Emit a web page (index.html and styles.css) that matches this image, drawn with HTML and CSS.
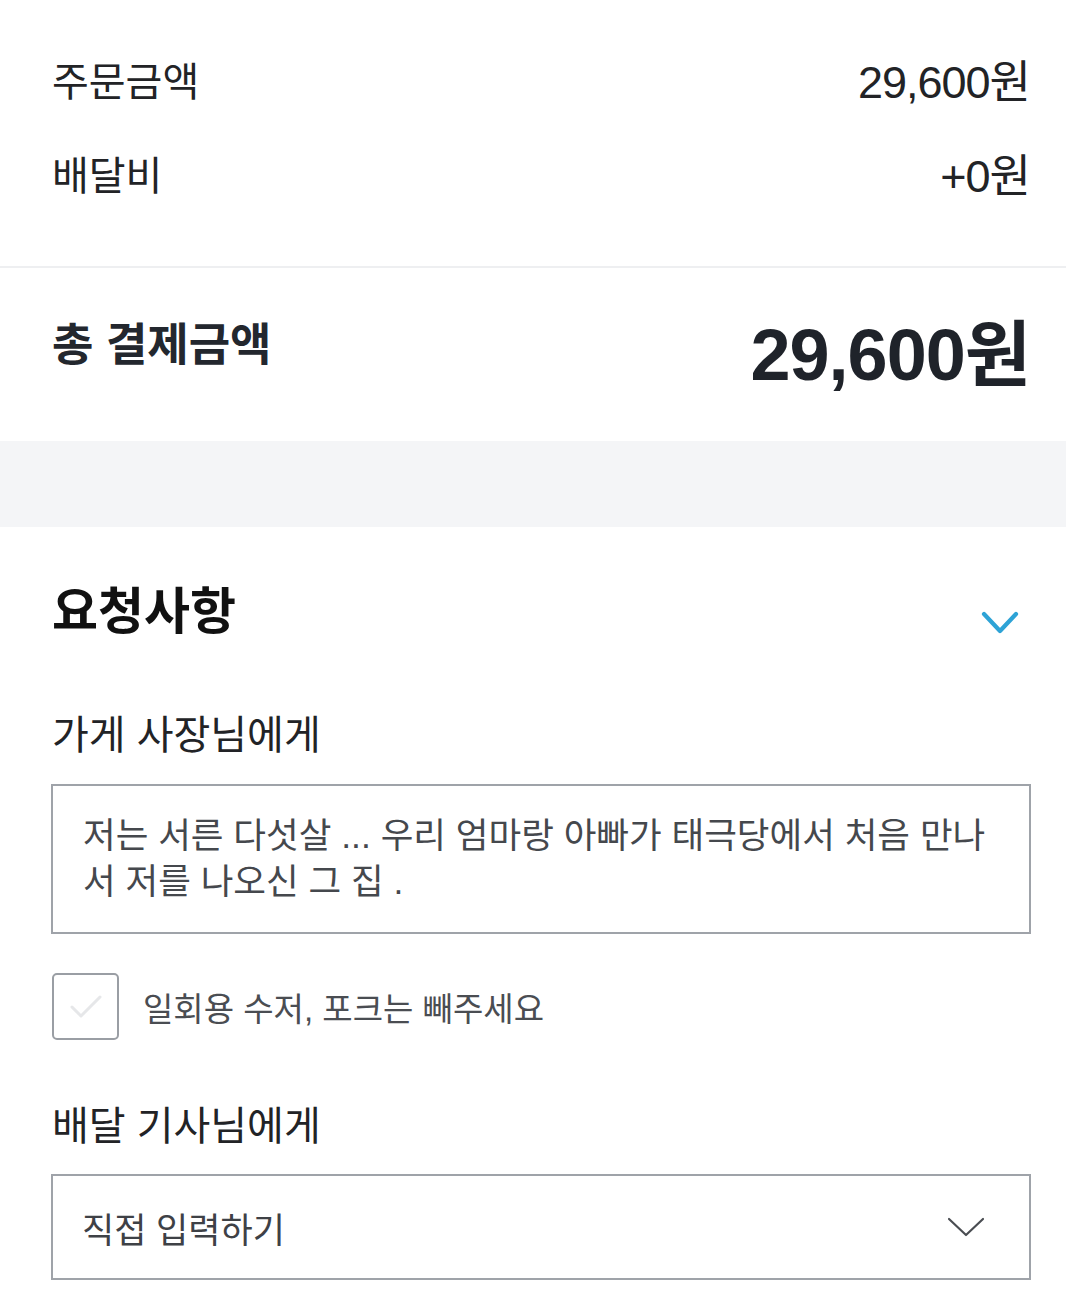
FILE: index.html
```html
<!DOCTYPE html>
<html lang="ko">
<head>
<meta charset="utf-8">
<title>주문 요약</title>
<link rel="stylesheet" href="styles.css">
</head>
<body>
<div class="page">
  <section class="summary">
    <div class="row">
      <span class="row-label">주문금액</span>
      <span class="row-value">29,600원</span>
    </div>
    <div class="row">
      <span class="row-label">배달비</span>
      <span class="row-value">+0원</span>
    </div>
  </section>
  <div class="divider"></div>
  <section class="total">
    <span class="total-label">총 결제금액</span>
    <span class="total-value">29,600원</span>
  </section>
  <div class="band"></div>
  <section class="request">
    <div class="req-head">
      <h2 class="req-title">요청사항</h2>
      <svg class="req-toggle" width="40" height="24" viewBox="0 0 40 24" aria-hidden="true">
        <polyline points="3,3 19,20 35,3" fill="none" stroke="#2ea3d6" stroke-width="4.2" stroke-linecap="round" stroke-linejoin="round"/>
      </svg>
    </div>
    <div class="field-label">가게 사장님에게</div>
    <div class="textbox">저는 서른 다섯살 ... 우리 엄마랑 아빠가 태극당에서 처음 만나<br>서 저를 나오신 그 집 .</div>
    <label class="check">
      <span class="check-box">
        <svg width="36" height="28" viewBox="0 0 36 28" aria-hidden="true">
          <polyline points="4,14 13,23 32,4" fill="none" stroke="#e6e7e9" stroke-width="3" stroke-linecap="round" stroke-linejoin="round"/>
        </svg>
      </span>
      <span class="check-text">일회용 수저, 포크는 빼주세요</span>
    </label>
    <div class="field-label field-label-2">배달 기사님에게</div>
    <div class="select">
      <span class="select-text">직접 입력하기</span>
      <svg width="38" height="22" viewBox="0 0 38 22" aria-hidden="true">
        <polyline points="2,3 19,19 36,3" fill="none" stroke="#4a4d52" stroke-width="2.2" stroke-linecap="round" stroke-linejoin="round"/>
      </svg>
    </div>
  </section>
</div>
</body>
</html>
```

FILE: styles.css
```css
html, body {
  margin: 0;
  padding: 0;
  background: #ffffff;
}

body {
  font-family: "Liberation Sans", "Noto Sans CJK KR", sans-serif;
  color: #222326;
}

.page {
  width: 1066px;
}

.summary {
  padding: 35px 36px 43px 51px;
}

.row {
  height: 94px;
  display: flex;
  align-items: center;
  justify-content: space-between;
}

.row-label {
  font-size: 40px;
  line-height: 1;
  padding-left: 1px;
}

.row-value {
  font-size: 45px;
  line-height: 1;
  letter-spacing: -1px;
}

.divider {
  height: 2px;
  background: #eeeff1;
}

.total {
  height: 173px;
  padding: 0 36px 0 51px;
  display: flex;
  align-items: center;
  justify-content: space-between;
}

.total-label {
  font-size: 45px;
  font-weight: 700;
  line-height: 1;
  color: #23272e;
  margin-bottom: 18px;
  padding-left: 1px;
}

.total-value {
  font-size: 72px;
  font-weight: 700;
  line-height: 1;
  color: #1f232a;
  letter-spacing: -1px;
}

.band {
  height: 86px;
  background: #f4f5f7;
}

.request {
  padding: 55px 35px 0 51px;
}

.req-head {
  height: 60px;
  display: flex;
  align-items: center;
  justify-content: space-between;
}

.req-title {
  margin: 0;
  font-size: 50px;
  font-weight: 700;
  line-height: 1;
  color: #111111;
  padding-left: 1px;
}

.req-toggle {
  margin-top: 22px;
  margin-right: 10px;
}

.field-label {
  margin-top: 68px;
  height: 50px;
  line-height: 50px;
  font-size: 40px;
  color: #222326;
  padding-left: 1px;
}

.field-label-2 {
  margin-top: 61px;
}

.textbox {
  margin-top: 24px;
  border: 2px solid #9fa3a9;
  padding: 27px 30px;
  font-size: 35.5px;
  line-height: 46px;
  color: #45484d;
  white-space: nowrap;
}

.check {
  margin-top: 39px;
  display: flex;
  align-items: center;
  gap: 24px;
}

.check-box {
  width: 63px;
  height: 63px;
  border: 2px solid #9a9ea4;
  border-radius: 5px;
  display: flex;
  align-items: center;
  justify-content: center;
  margin-left: 1px;
}

.check-text {
  font-size: 33px;
  color: #4a4d52;
}

.select {
  margin-top: 23px;
  height: 102px;
  border: 2px solid #9fa3a9;
  padding: 0 44px 0 29px;
  display: flex;
  align-items: center;
  justify-content: space-between;
}

.select-text {
  font-size: 35px;
  color: #3e4146;
}
```
